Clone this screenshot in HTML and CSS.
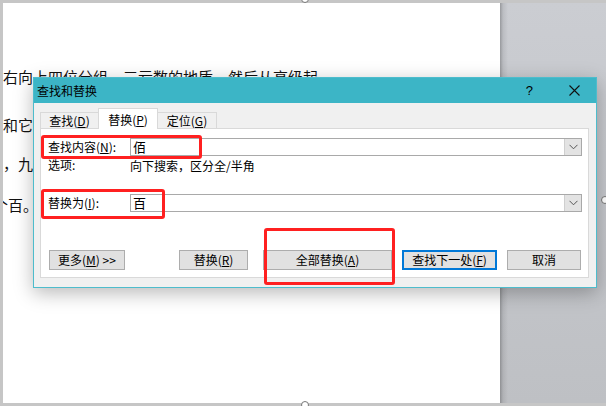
FILE: index.html
```html
<!DOCTYPE html>
<html lang="zh-CN">
<head>
<meta charset="utf-8">
<title>查找和替换</title>
<link rel="stylesheet" href="styles.css">
</head>
<body>
<div class="screen">
  <div class="doc">
    <p class="line l1">右向上四位分组，三亏数的地质，然后从高级起</p>
    <p class="line l2">和它</p>
    <p class="line l3">，九</p>
    <p class="line l4">个百。</p>
  </div>
  <div class="side"></div>
  <span class="handle h-top"></span>
  <span class="handle h-bottom"></span>
  <span class="handle h-right"></span>

  <div class="dialog">
    <div class="titlebar">
      <span class="title">查找和替换</span>
      <span class="help">?</span>
      <svg class="close" width="11" height="11" viewBox="0 0 11 11"><path d="M0.5 0.5 L10.5 10.5 M10.5 0.5 L0.5 10.5" stroke="#111" stroke-width="1.1" fill="none"/></svg>
    </div>
    <div class="body">
      <div class="tabs">
        <div class="tab t1">查找(<u>D</u>)</div>
        <div class="tab t2 active">替换(<u>P</u>)</div>
        <div class="tab t3">定位(<u>G</u>)</div>
      </div>
      <div class="panel">
        <div class="row r1">
          <span class="label">查找内容(<u>N</u>):</span>
          <div class="combo"><span class="value">佰</span><span class="drop"><svg width="9" height="6" viewBox="0 0 9 6"><path d="M0.5 0.8 L4.5 4.8 L8.5 0.8" stroke="#555" stroke-width="1" fill="none"/></svg></span></div>
        </div>
        <div class="row opts">
          <span class="label">选项:</span>
          <span class="opt-value">向下搜索，区分全/半角</span>
        </div>
        <div class="row r2">
          <span class="label">替换为(<u>I</u>):</span>
          <div class="combo"><span class="value">百</span><span class="drop"><svg width="9" height="6" viewBox="0 0 9 6"><path d="M0.5 0.8 L4.5 4.8 L8.5 0.8" stroke="#555" stroke-width="1" fill="none"/></svg></span></div>
        </div>
        <div class="buttons">
          <div class="btn b-more">更多(<u>M</u>) &gt;&gt;</div>
          <div class="btn b-rep">替换(<u>R</u>)</div>
          <div class="btn b-all">全部替换(<u>A</u>)</div>
          <div class="btn b-next">查找下一处(<u>F</u>)</div>
          <div class="btn b-cancel">取消</div>
        </div>
      </div>
    </div>
    <div class="mark m1"></div>
    <div class="mark m2"></div>
    <div class="mark m3"></div>
  </div>
</div>
</body>
</html>
```

FILE: styles.css
```css
html, body {
  margin: 0;
  padding: 0;
}
body {
  width: 606px;
  height: 406px;
  overflow: hidden;
  font-family: "Noto Sans CJK SC", "Noto Sans", sans-serif;
  color: #000;
}
.screen {
  position: relative;
  display: flex;
  height: 406px;
  box-sizing: border-box;
  padding: 3px 0 3px 3px;
  background: #c6c6c6;
}
.doc {
  flex: 0 0 497px;
  background: #fff;
  overflow: hidden;
  box-sizing: border-box;
  padding-top: 64px;
}
.line {
  margin: 0;
  height: 20px;
  line-height: 20px;
  font-size: 15px;
  white-space: nowrap;
  color: #111;
}
.l2 { margin-top: 28px; }
.l3 { margin-top: 19px; }
.l4 { margin-top: 21px; text-indent: -10px; }
.side {
  flex: 1;
  background:
    linear-gradient(to right, rgba(0,0,0,0.25) 0, rgba(0,0,0,0.08) 3px, rgba(0,0,0,0) 8px),
    linear-gradient(#cbcdd2, #bec0c4);
}
.handle {
  position: absolute;
  width: 6px;
  height: 6px;
  border: 1px solid #777;
  border-radius: 50%;
  background: #fff;
}
.h-top { left: 301px; top: -5px; }
.h-bottom { left: 301px; top: 401px; }
.h-right { left: 601px; top: 196px; }

/* dialog */
.dialog {
  position: absolute;
  left: 33px;
  top: 77px;
  width: 564px;
  height: 211px;
  box-sizing: border-box;
  border: 1px solid #4dbccc;
  background: #f0f0f0;
  box-shadow: 0 5px 18px rgba(0,0,0,0.28);
  display: flex;
  flex-direction: column;
}
.titlebar {
  flex: none;
  height: 25px;
  background: #3cb5c6;
  display: flex;
  align-items: center;
  padding-left: 3px;
}
.title {
  font-size: 12px;
  line-height: 16px;
}
.help {
  margin-left: auto;
  font-size: 13px;
  line-height: 16px;
  font-family: "Liberation Sans", sans-serif;
}
.close {
  margin-left: 36px;
  margin-right: 16px;
}
.body {
  flex: 1;
  display: flex;
  flex-direction: column;
  padding: 0 7px 0 6px;
}
.tabs {
  flex: none;
  height: 25px;
  display: flex;
  align-items: flex-end;
}
.tab {
  box-sizing: border-box;
  height: 16px;
  border: 1px solid #d9d9d9;
  border-bottom: none;
  font-size: 12px;
  line-height: 15px;
  text-align: center;
  background: #f0f0f0;
}
.t1 { width: 58px; border-right: none; }
.t2 { width: 60px; }
.t3 { width: 59px; border-left: none; }
.tab.active {
  height: 21px;
  margin-bottom: -1px;
  padding-top: 3px;
  background: #fff;
  position: relative;
  z-index: 1;
}
.panel {
  flex: none;
  height: 150px;
  box-sizing: border-box;
  border: 1px solid #d9d9d9;
  background: #fff;
  padding: 0 6px 0 7px;
  display: flex;
  flex-direction: column;
}
.row {
  display: flex;
  align-items: center;
  font-size: 12px;
}
.r1 { margin-top: 9px; height: 18px; }
.opts { margin-top: 1px; height: 16px; }
.r2 { margin-top: 21px; height: 18px; }
.label {
  flex: none;
  width: 82px;
  line-height: 16px;
}
.combo {
  flex: 1;
  height: 18px;
  box-sizing: border-box;
  border: 1px solid #a9a9a9;
  background: #fff;
  display: flex;
  align-items: center;
}
.value {
  padding-left: 2px;
  font-size: 13px;
  line-height: 16px;
}
.drop {
  margin-left: auto;
  width: 17px;
  height: 16px;
  box-sizing: border-box;
  background: #e3e3e3;
  border-left: 1px solid #cfcfcf;
  display: flex;
  align-items: center;
  justify-content: center;
}
.buttons {
  margin-top: 38px;
  display: flex;
}
.btn {
  box-sizing: border-box;
  height: 20px;
  border: 1px solid #adadad;
  background: #e1e1e1;
  font-size: 12px;
  line-height: 16px;
  display: flex;
  align-items: center;
  justify-content: center;
  white-space: nowrap;
}
.b-more { width: 76px; margin-left: 1px; }
.b-rep { width: 69px; margin-left: 54px; }
.b-all { width: 129px; margin-left: 15px; }
.b-next { width: 95px; margin-left: 10px; border: 2px solid #0078d7; }
.b-cancel { width: 74px; margin-left: 10px; }

/* red annotation boxes */
.mark {
  position: absolute;
  box-sizing: border-box;
  border: 3px solid #ff2020;
  border-radius: 3px;
}
.m1 { left: 7px; top: 57px; width: 161px; height: 24px; }
.m2 { left: 7px; top: 111px; width: 124px; height: 30px; }
.m3 { left: 230px; top: 150px; width: 131px; height: 57px; }
```
